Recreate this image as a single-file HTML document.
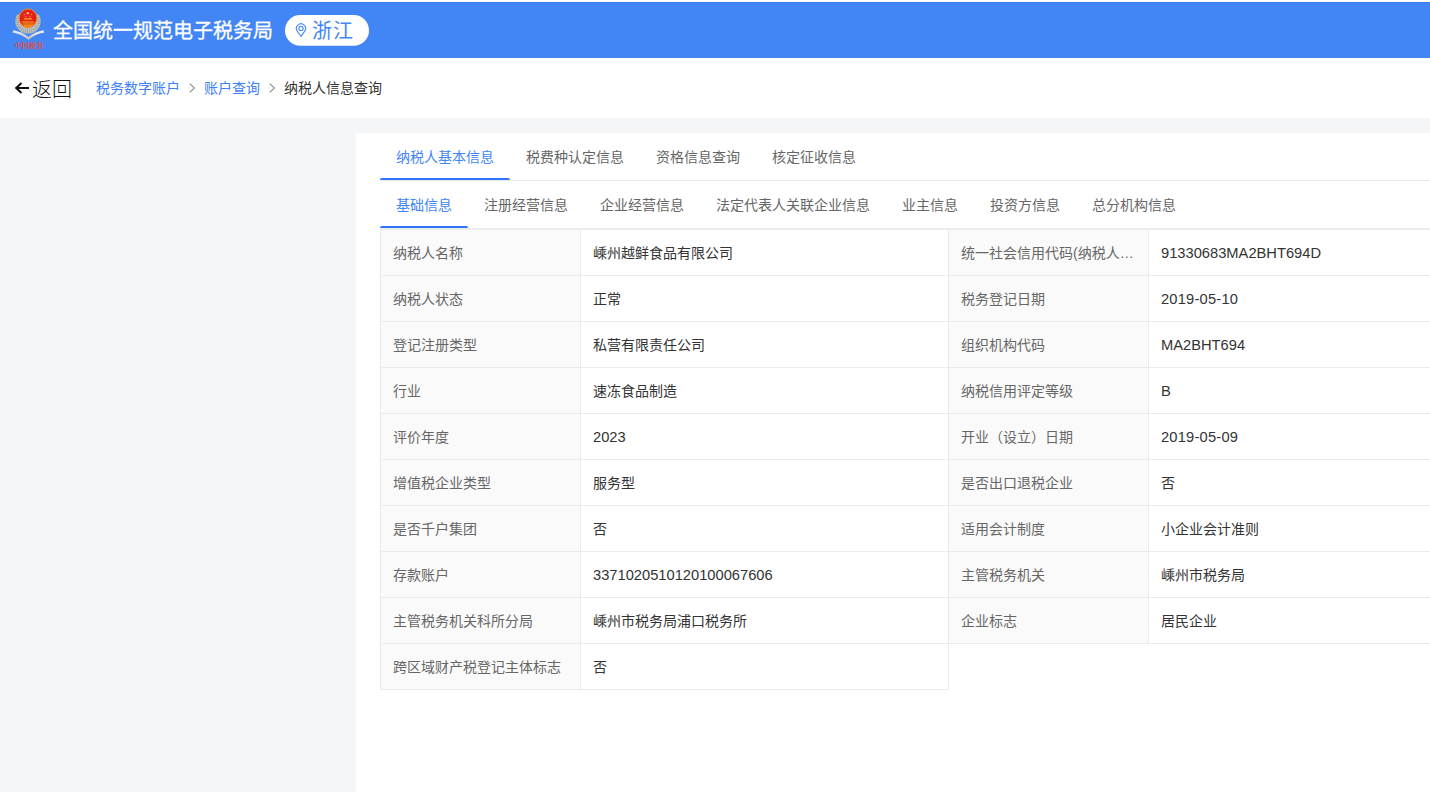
<!DOCTYPE html>
<html lang="zh-CN">
<head>
<meta charset="utf-8">
<title>纳税人信息查询</title>
<style>
*{box-sizing:border-box;margin:0;padding:0}
html,body{width:1430px;height:792px;overflow:hidden;background:#f5f6f8}
body{font-family:"Liberation Sans","Noto Sans CJK SC",sans-serif;font-size:14px;color:#333;position:relative}
.topstrip{position:absolute;left:0;top:0;width:1430px;height:2px;background:#fffdfa}
.header{position:absolute;left:0;top:2px;width:1430px;height:56px;background:#4285f4;box-shadow:inset 0 1px 0 #3c7eee}
.logo{position:absolute;left:8px;top:4px;z-index:3}
.title{position:absolute;left:53px;top:0;height:56px;line-height:58px;-webkit-text-stroke:0.3px #fff;font-size:20px;color:#fff;white-space:nowrap}
.pill{position:absolute;left:285px;top:13px;width:84px;height:31px;color:#4285f4}
.pill svg{position:absolute;left:10px;top:8px}
.pill span{position:absolute;left:27px;top:0;line-height:32px;font-size:20px;letter-spacing:1px;white-space:nowrap}
.crumb{position:absolute;left:0;top:58px;width:1430px;height:60px;background:#fff}
.back{position:absolute;left:32px;top:0;height:60px;line-height:65px;font-size:20px;color:#111;white-space:nowrap;font-weight:300}
.bc{position:absolute;top:0;height:60px;line-height:60px;font-size:14px;white-space:nowrap}
.bc.l{color:#3d7ff7}
.bc.s{color:#999}
.bc.c{color:#333}
.panel{position:absolute;left:356px;top:133px;width:1200px;height:700px;background:#fff}
.tabs{position:absolute;left:24px;width:1176px;height:48px;border-bottom:1px solid #ebebeb}
.tabs .t{position:absolute;top:0;height:47px;line-height:49px;padding:0 16px;color:#666;white-space:nowrap}
.tabs .t.a{color:#4285f4}
.tabs .t.a:after{content:"";position:absolute;left:0;right:0;bottom:0;height:2px;background:#2f74f5;border-radius:2px 2px 0 0}
table{position:absolute;left:24px;top:96px;border-collapse:separate;border-spacing:0;table-layout:fixed;width:1176px;border-top:1px solid #ebebeb;border-left:1px solid #ebebeb}
td{height:46px;border-right:1px solid #ebebeb;border-bottom:1px solid #ebebeb;padding:0 12px 2px;white-space:nowrap;overflow:hidden;text-overflow:ellipsis;font-size:14px}
td.k{background:#fafafa;color:#666}
td.v{color:#333}
td.n{font-size:14.7px;padding-bottom:0}
td.d{letter-spacing:0.2px}
td.e{border:none;background:#fff}
</style>
</head>
<body>
<div class="topstrip"></div>
<div class="header">
  <div class="title">全国统一规范电子税务局</div>
  <div class="pill"><svg width="84" height="32" viewBox="0 0 84 32" style="position:absolute;left:0;top:0"><rect x="0" y="0.1" width="84" height="30.6" rx="15.3" fill="#fff"/></svg><svg width="14" height="18" viewBox="294 21 14 18" style="position:absolute;left:9px;top:6px"><path d="M301 36.4 L297.3 31.2 A4.6 4.6 0 1 1 304.7 31.2 Z" fill="none" stroke="#4285f4" stroke-width="1.1" stroke-linejoin="round"/><circle cx="301" cy="28.4" r="2.1" fill="none" stroke="#4285f4" stroke-width="1.1"/></svg><span>浙江</span></div>
</div>
<svg class="logo" viewBox="8 4 44 52" width="44" height="52">
  <defs>
    <radialGradient id="rg" cx="0.45" cy="0.35" r="0.75"><stop offset="0" stop-color="#f0281e"/><stop offset="0.7" stop-color="#e01a14"/><stop offset="1" stop-color="#f08a1c"/></radialGradient>
    <linearGradient id="sg" x1="0" y1="0" x2="0" y2="1"><stop offset="0" stop-color="#f4f4f4"/><stop offset="1" stop-color="#b9b9b9"/></linearGradient>
  </defs>
  <clipPath id="wc"><rect x="12" y="14.6" width="32" height="22"/></clipPath>
  <g clip-path="url(#wc)"><circle cx="28" cy="20.9" r="12.7" fill="#bfc1c3"/>
  <circle cx="28" cy="20.9" r="11.2" fill="none" stroke="#7d8186" stroke-width="3" stroke-dasharray="0.8 1.4" opacity="0.6"/>
  <circle cx="28" cy="20.9" r="8.6" fill="none" stroke="#8a8e92" stroke-width="2.4" stroke-dasharray="0.7 1.2" opacity="0.5"/></g>
  <path d="M12.6 32.4 L13.5 30.2 C18.5 31 24 33.5 28.4 36.8 C32.8 33.5 38.3 31 43.3 30.2 L44.4 32.4 C38.5 33.2 33 36 28.4 39.9 C23.8 36 18.3 33.2 12.6 32.4 Z" fill="url(#sg)"/>
  <ellipse cx="28" cy="18.3" rx="8.9" ry="9.4" fill="url(#rg)" stroke="#f39a1e" stroke-width="0.9"/>
  <path d="M21.6 21.4 h12.8 v1.2 h-12.8z M22.6 23.4 h10.8 v1.1 h-10.8z M23.4 19.6 h9.2 l-1 -1.4 h-7.2z M24 25.2 h8 v1.3 h-8z" fill="#f7b21a"/>
  <circle cx="27.8" cy="13.2" r="1.1" fill="#fbe08a"/>
  <circle cx="24.2" cy="14.6" r="0.5" fill="#fbd27a"/><circle cx="31.4" cy="14.6" r="0.5" fill="#fbd27a"/>
  <circle cx="25.6" cy="16.8" r="0.5" fill="#fbd27a"/><circle cx="30" cy="16.8" r="0.5" fill="#fbd27a"/>
  <text x="14.6" y="48.1" font-family="'Liberation Serif','Noto Serif CJK SC',serif" font-size="7.2" font-weight="700" fill="#ea4a33" textLength="29" lengthAdjust="spacingAndGlyphs">中国税务</text>
</svg>
<div class="crumb">
  <svg width="18" height="16" viewBox="13 80 18 16" style="position:absolute;left:13px;top:22px"><path d="M29 88 H16.2 M21.5 82.9 L16.2 88 L21.5 93.1" fill="none" stroke="#111" stroke-width="2.1"/></svg><div class="back">返回</div>
  <div class="bc l" style="left:96px">税务数字账户</div>
  <svg width="8" height="12" viewBox="0 0 8 12" style="position:absolute;left:188px;top:24px"><path d="M1.8 1.7 L6.4 6 L1.8 10.3" fill="none" stroke="#999" stroke-width="1.2"/></svg>
  <div class="bc l" style="left:204px">账户查询</div>
  <svg width="8" height="12" viewBox="0 0 8 12" style="position:absolute;left:268px;top:24px"><path d="M1.8 1.7 L6.4 6 L1.8 10.3" fill="none" stroke="#999" stroke-width="1.2"/></svg>
  <div class="bc c" style="left:284px">纳税人信息查询</div>
</div>
<div class="panel">
  <div class="tabs" style="top:0">
    <div class="t a" style="left:0">纳税人基本信息</div>
    <div class="t" style="left:130px">税费种认定信息</div>
    <div class="t" style="left:260px">资格信息查询</div>
    <div class="t" style="left:376px">核定征收信息</div>
  </div>
  <div class="tabs" style="top:48px">
    <div class="t a" style="left:0">基础信息</div>
    <div class="t" style="left:88px">注册经营信息</div>
    <div class="t" style="left:204px">企业经营信息</div>
    <div class="t" style="left:320px">法定代表人关联企业信息</div>
    <div class="t" style="left:506px">业主信息</div>
    <div class="t" style="left:594px">投资方信息</div>
    <div class="t" style="left:696px">总分机构信息</div>
  </div>
  <table>
    <colgroup><col style="width:200px"><col style="width:368px"><col style="width:200px"><col style="width:408px"></colgroup>
    <tr><td class="k">纳税人名称</td><td class="v">嵊州越鲜食品有限公司</td><td class="k">统一社会信用代码(纳税人识别号)</td><td class="v n">91330683MA2BHT694D</td></tr>
    <tr><td class="k">纳税人状态</td><td class="v">正常</td><td class="k">税务登记日期</td><td class="v n d">2019-05-10</td></tr>
    <tr><td class="k">登记注册类型</td><td class="v">私营有限责任公司</td><td class="k">组织机构代码</td><td class="v n">MA2BHT694</td></tr>
    <tr><td class="k">行业</td><td class="v">速冻食品制造</td><td class="k">纳税信用评定等级</td><td class="v n">B</td></tr>
    <tr><td class="k">评价年度</td><td class="v n">2023</td><td class="k">开业（设立）日期</td><td class="v n d">2019-05-09</td></tr>
    <tr><td class="k">增值税企业类型</td><td class="v">服务型</td><td class="k">是否出口退税企业</td><td class="v">否</td></tr>
    <tr><td class="k">是否千户集团</td><td class="v">否</td><td class="k">适用会计制度</td><td class="v">小企业会计准则</td></tr>
    <tr><td class="k">存款账户</td><td class="v n">3371020510120100067606</td><td class="k">主管税务机关</td><td class="v">嵊州市税务局</td></tr>
    <tr><td class="k">主管税务机关科所分局</td><td class="v">嵊州市税务局浦口税务所</td><td class="k">企业标志</td><td class="v">居民企业</td></tr>
    <tr><td class="k">跨区域财产税登记主体标志</td><td class="v">否</td><td class="e"></td><td class="e"></td></tr>
  </table>
</div>
</body>
</html>
